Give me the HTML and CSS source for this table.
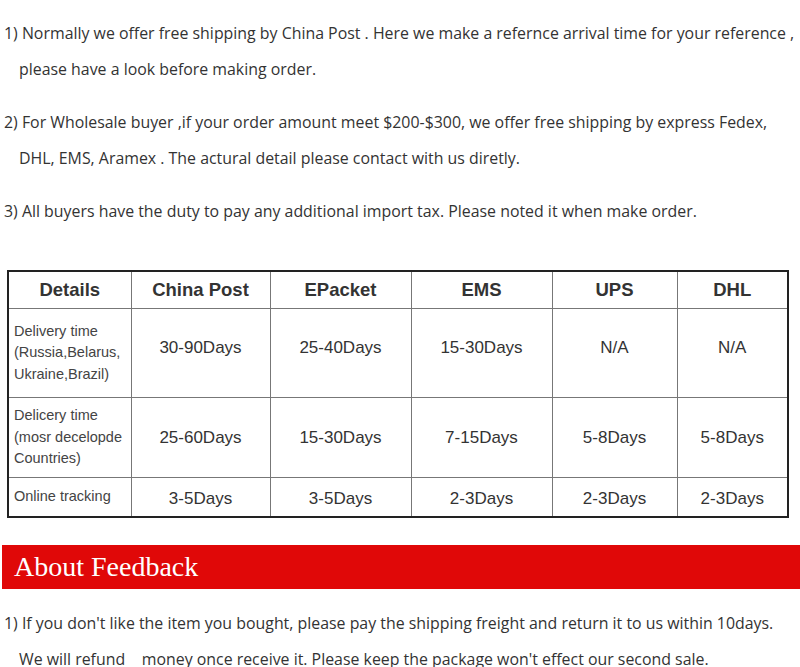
FILE: index.html
```html
<!DOCTYPE html>
<html>
<head>
<meta charset="utf-8">
<link rel="stylesheet" href="styles.css">
</head>
<body>
<div class="page">
  <p class="item">1) Normally we offer free shipping by China Post . Here we make a refernce arrival time for your reference ,<br>please have a look before making order.</p>
  <p class="item">2) For Wholesale buyer ,if your order amount meet $200-$300, we offer free shipping by express Fedex,<br>DHL, EMS, Aramex . The actural detail please contact with us diretly.</p>
  <p class="item">3) All buyers have the duty to pay any additional import tax. Please noted it when make order.</p>

  <table class="ship">
    <colgroup>
      <col class="c1"><col class="c2"><col class="c3"><col class="c4"><col class="c5"><col class="c6">
    </colgroup>
    <tr class="head">
      <th>Details</th><th>China Post</th><th>EPacket</th><th>EMS</th><th>UPS</th><th>DHL</th>
    </tr>
    <tr class="r1">
      <td class="label">Delivery time<br>(Russia,Belarus,<br>Ukraine,Brazil)</td>
      <td>30-90Days</td><td>25-40Days</td><td>15-30Days</td><td>N/A</td><td>N/A</td>
    </tr>
    <tr class="r2">
      <td class="label">Delicery time<br>(mosr decelopde<br>Countries)</td>
      <td>25-60Days</td><td>15-30Days</td><td>7-15Days</td><td>5-8Days</td><td>5-8Days</td>
    </tr>
    <tr class="r3">
      <td class="label">Online tracking</td>
      <td>3-5Days</td><td>3-5Days</td><td>2-3Days</td><td>2-3Days</td><td>2-3Days</td>
    </tr>
  </table>

  <div class="banner">About Feedback</div>

  <p class="item">1) If you don't like the item you bought, please pay the shipping freight and return it to us within 10days.<br>We will refund &nbsp;&nbsp;&nbsp;money once receive it. Please keep the package won't effect our second sale.</p>
</div>
</body>
</html>
```

FILE: styles.css
```css
html, body {
  margin: 0;
  padding: 0;
  background: #fff;
}
.page {
  padding-top: 15px;
  font-family: "Open Sans", "Liberation Sans", sans-serif;
  font-size: 15.9px;
  color: #333;
}
.item {
  margin: 0 0 17px 0;
  padding-left: 19px;
  text-indent: -15px;
  line-height: 36px;
  white-space: nowrap;
}
.ship {
  margin: 41px 0 0 7px;
  border-collapse: collapse;
  border: 2px solid #222;
  width: 780px;
  table-layout: fixed;
  font-family: "Liberation Sans", Arial, sans-serif;
  color: #333;
}
.c1 { width: 123px; }
.c2 { width: 139px; }
.c3 { width: 141px; }
.c4 { width: 141px; }
.c5 { width: 125px; }
.c6 { width: 111px; }
.ship th, .ship td {
  border: 1px solid #777;
  text-align: center;
  vertical-align: middle;
  padding: 0;
}
.ship th {
  font-size: 18.5px;
  font-weight: bold;
  height: 36px;
}
.ship td {
  font-size: 17px;
}
.ship td.label {
  text-align: left;
  font-size: 14.5px;
  line-height: 21.5px;
  padding-left: 5px;
  color: #444;
}
.r1 td { height: 78px; padding-bottom: 10px; }
.r1 td.label { padding-bottom: 0; height: 88px; }
.r2 td { height: 79px; }
.r3 td { height: 35px; padding-top: 3px; }
.r3 td.label { height: 38px; padding-top: 0; }
.banner {
  margin: 27px 0 16px 2px;
  height: 44px;
  background: #e00808;
  color: #fff;
  font-family: "Liberation Serif", "Times New Roman", serif;
  font-size: 28px;
  line-height: 44px;
  padding-left: 12px;
}
```
